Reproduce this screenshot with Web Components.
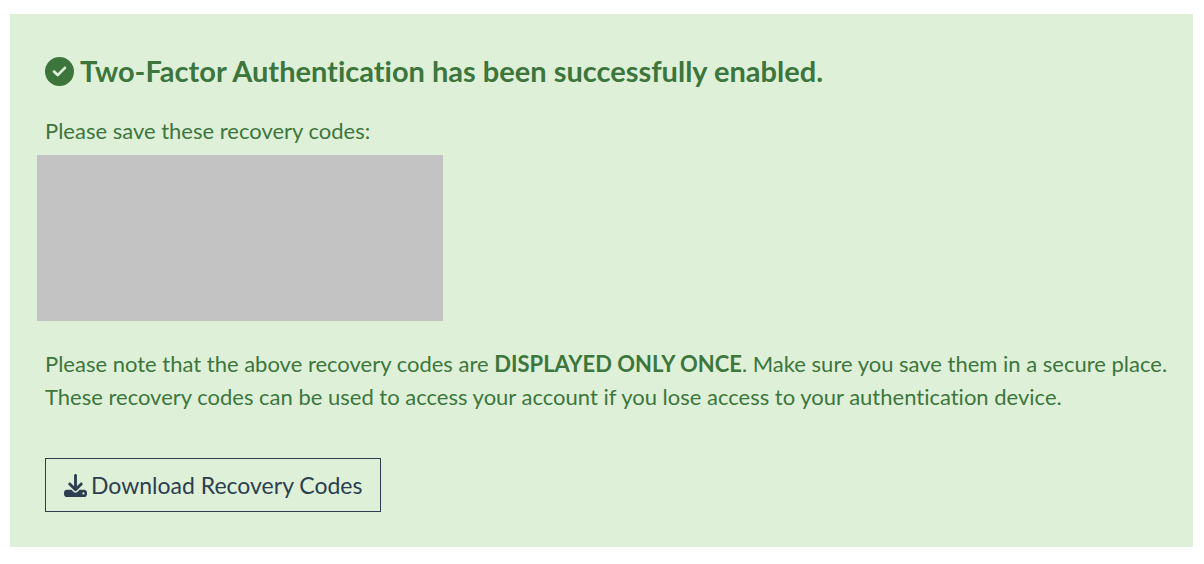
<!DOCTYPE html>
<html lang="en">
<head>
<meta charset="utf-8">
<title>Two-Factor Authentication</title>
<style>
    body {
        margin: 14px 11px 17px 10px;
        background: #fff;
        font-family: Lato, "Liberation Sans", sans-serif;
        font-variant-ligatures: none;
    }
</style>
</head>
<body>
<success-panel>
    <span slot="title">Two-Factor Authentication has been successfully enabled.</span>
    <recovery-codes>Please save these recovery codes:</recovery-codes>
    <recovery-note>Please note that the above recovery codes are <strong>DISPLAYED ONLY ONCE</strong>. Make sure you save them in a secure place.<br>These recovery codes can be used to access your account if you lose access to your authentication device.</recovery-note>
    <download-button>Download Recovery Codes</download-button>
</success-panel>

<script>
class SuccessPanel extends HTMLElement {
    constructor() {
        super();
        this.attachShadow({ mode: 'open' });
    }

    connectedCallback() {
        this.shadowRoot.innerHTML = `
            <style>
                :host {
                    display: block;
                    padding: 35px 16px 35px 35px;
                    background: #dff0d8;
                    color: #3c763d;
                    font-size: 22px;
                    line-height: 33px;
                }
                h1 {
                    display: flex;
                    align-items: center;
                    gap: 6px;
                    margin: 0 0 21px;
                    font-size: 29px;
                    font-weight: 700;
                    line-height: 44px;
                }
                svg {
                    flex: none;
                    width: 29px;
                    height: 29px;
                }
            </style>
            <h1>
                <svg viewBox="0 0 512 512" fill="currentColor" aria-hidden="true">
                    <path d="M256 512A256 256 0 1 0 256 0a256 256 0 1 0 0 512zM369 209L241 337c-9.400 9.400-24.600 9.400-33.900 0l-64-64c-9.400-9.400-9.400-24.600 0-33.900s24.600-9.400 33.900 0l47 47L335 175c9.400-9.400 24.600-9.400 33.900 0s9.400 24.600 0 33.900z"/>
                </svg>
                <slot name="title"></slot>
            </h1>
            <slot></slot>
        `;
    }
}

class RecoveryCodes extends HTMLElement {
    constructor() {
        super();
        this.attachShadow({ mode: 'open' });
    }

    connectedCallback() {
        this.shadowRoot.innerHTML = `
            <style>
                :host {
                    display: block;
                }
                p {
                    margin: 0;
                }
                .codes {
                    width: 406px;
                    max-width: 100%;
                    height: 166px;
                    margin: 8px 0 0 -8px;
                    background: #c3c3c3;
                }
            </style>
            <p><slot></slot></p>
            <div class="codes"></div>
        `;
    }
}

class RecoveryNote extends HTMLElement {
    constructor() {
        super();
        this.attachShadow({ mode: 'open' });
    }

    connectedCallback() {
        this.shadowRoot.innerHTML = `
            <style>
                :host {
                    display: block;
                    margin: 26px 0 45px;
                }
                p {
                    margin: 0;
                }
                ::slotted(strong) {
                    font-weight: 700;
                }
            </style>
            <p><slot></slot></p>
        `;
    }
}

class DownloadButton extends HTMLElement {
    constructor() {
        super();
        this.attachShadow({ mode: 'open' });
    }

    connectedCallback() {
        this.shadowRoot.innerHTML = `
            <style>
                :host {
                    display: block;
                }
                button {
                    display: flex;
                    align-items: center;
                    gap: 4px;
                    padding: 9px 18px;
                    border: 1px solid #2c3e50;
                    border-radius: 0;
                    background: transparent;
                    color: #2c3e50;
                    font: inherit;
                    font-size: 23px;
                    line-height: 34px;
                    cursor: pointer;
                }
                svg {
                    flex: none;
                    width: 23px;
                    height: 23px;
                }
            </style>
            <button type="button">
                <svg viewBox="0 0 512 512" fill="currentColor" aria-hidden="true">
                    <path d="M288 32c0-17.700-14.300-32-32-32s-32 14.300-32 32V274.700l-73.400-73.400c-12.500-12.500-32.800-12.500-45.300 0s-12.500 32.800 0 45.300l128 128c12.500 12.500 32.800 12.500 45.300 0l128-128c12.500-12.500 12.500-32.800 0-45.300s-32.800-12.500-45.300 0L288 274.700V32zM64 352c-35.300 0-64 28.700-64 64v32c0 35.300 28.700 64 64 64H448c35.300 0 64-28.700 64-64V416c0-35.300-28.700-64-64-64H346.500l-45.300 45.300c-25 25-65.500 25-90.500 0L165.500 352H64zm368 56a24 24 0 1 1 0 48 24 24 0 1 1 0-48z"/>
                </svg>
                <slot></slot>
            </button>
        `;
    }
}

customElements.define('success-panel', SuccessPanel);
customElements.define('recovery-codes', RecoveryCodes);
customElements.define('recovery-note', RecoveryNote);
customElements.define('download-button', DownloadButton);
</script>
</body>
</html>
